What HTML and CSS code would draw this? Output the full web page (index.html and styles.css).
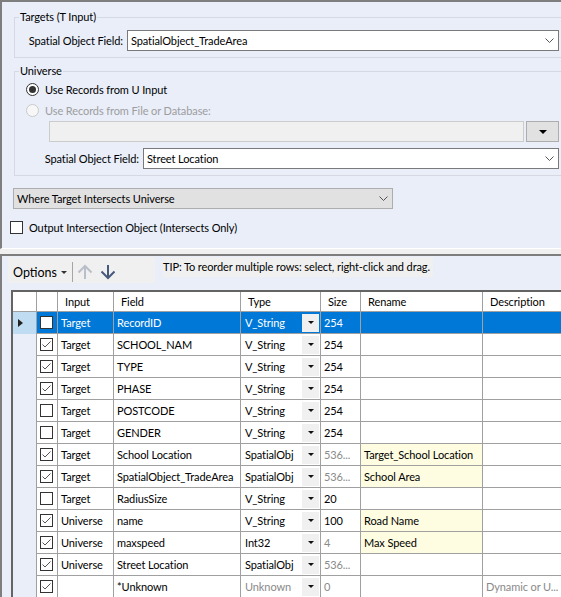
FILE: index.html
```html
<!DOCTYPE html>
<html>
<head>
<meta charset="utf-8">
<title>Spatial Match</title>
<link rel="stylesheet" href="styles.css">
</head>
<body>
<div class="app">
  <section class="panel config">
    <fieldset class="group targets">
      <legend>Targets (T Input)</legend>
      <div class="field-row">
        <span class="field-label lbl-targets">Spatial Object Field:</span>
        <div class="combo"><span>SpatialObject_TradeArea</span><svg class="chev" width="9" height="5" viewBox="0 0 9 5"><path d="M.5.5l4 4 4-4" fill="none" stroke="#555"/></svg></div>
      </div>
    </fieldset>
    <fieldset class="group universe">
      <legend>Universe</legend>
      <div class="radio-row"><span class="radio on"><span class="dot"></span></span><span>Use Records from U Input</span></div>
      <div class="radio-row disabled"><span class="radio"></span><span>Use Records from File or Database:</span></div>
      <div class="file-row">
        <div class="file-input"></div>
        <div class="file-btn"><span class="tri-down"></span></div>
      </div>
      <div class="field-row gap-top">
        <span class="field-label lbl-universe">Spatial Object Field:</span>
        <div class="combo"><span>Street Location</span><svg class="chev" width="9" height="5" viewBox="0 0 9 5"><path d="M.5.5l4 4 4-4" fill="none" stroke="#555"/></svg></div>
      </div>
    </fieldset>
    <div class="combo flat where"><span>Where Target Intersects Universe</span><svg class="chev" width="9" height="5" viewBox="0 0 9 5"><path d="M.5.5l4 4 4-4" fill="none" stroke="#555"/></svg></div>
    <div class="check-row"><span class="box"></span><span>Output Intersection Object (Intersects Only)</span></div>
  </section>
  <div class="divider"></div>
  <section class="panel fields">
    <div class="toolbar-row">
      <div class="toolbar">
        <span class="options">Options</span>
        <span class="mini-tri"></span>
        <span class="sep"></span>
        <svg class="arrow up" width="16" height="16" viewBox="0 0 16 16"><path d="M8 15V2.5M1.5 8.5L8 2l6.5 6.5" fill="none" stroke="#b9bfc9" stroke-width="2"/></svg>
        <svg class="arrow down" width="16" height="16" viewBox="0 0 16 16"><path d="M8 1v12.5M1.5 7.5L8 14l6.5-6.5" fill="none" stroke="#48597b" stroke-width="2"/></svg>
      </div>
      <div class="tip">TIP: To reorder multiple rows: select, right-click and drag.</div>
    </div>

    <div class="grid">
      <div class="row head">
        <div class="c rh"></div><div class="c"></div><div class="c hd">Input</div><div class="c hd">Field</div><div class="c hd">Type</div><div class="c hd">Size</div><div class="c hd">Rename</div><div class="c hd">Description</div>
      </div>

      <div class="row sel">
        <div class="c rh"><span class="tri-right"></span></div>
        <div class="c cb"><svg width="13" height="13" viewBox="0 0 13 13"><rect x=".5" y=".5" width="12" height="12" fill="#fff" stroke="#333"/></svg></div>
        <div class="c">Target</div><div class="c">RecordID</div>
        <div class="c type"><span>V_String</span><span class="dd"><span class="dd-tri"></span></span></div>
        <div class="c">254</div><div class="c"></div><div class="c"></div>
      </div>

      <div class="row">
        <div class="c rh"></div>
        <div class="c cb"><svg width="13" height="13" viewBox="0 0 13 13"><rect x=".5" y=".5" width="12" height="12" fill="#fff" stroke="#333"/><path d="M2.5 6.5l2.5 2.5 5.5-5.5" fill="none" stroke="#555"/></svg></div>
        <div class="c">Target</div><div class="c">SCHOOL_NAM</div>
        <div class="c type"><span>V_String</span><span class="dd"><span class="dd-tri"></span></span></div>
        <div class="c">254</div><div class="c"></div><div class="c"></div>
      </div>

      <div class="row">
        <div class="c rh"></div>
        <div class="c cb"><svg width="13" height="13" viewBox="0 0 13 13"><rect x=".5" y=".5" width="12" height="12" fill="#fff" stroke="#333"/><path d="M2.5 6.5l2.5 2.5 5.5-5.5" fill="none" stroke="#555"/></svg></div>
        <div class="c">Target</div><div class="c">TYPE</div>
        <div class="c type"><span>V_String</span><span class="dd"><span class="dd-tri"></span></span></div>
        <div class="c">254</div><div class="c"></div><div class="c"></div>
      </div>

      <div class="row">
        <div class="c rh"></div>
        <div class="c cb"><svg width="13" height="13" viewBox="0 0 13 13"><rect x=".5" y=".5" width="12" height="12" fill="#fff" stroke="#333"/><path d="M2.5 6.5l2.5 2.5 5.5-5.5" fill="none" stroke="#555"/></svg></div>
        <div class="c">Target</div><div class="c">PHASE</div>
        <div class="c type"><span>V_String</span><span class="dd"><span class="dd-tri"></span></span></div>
        <div class="c">254</div><div class="c"></div><div class="c"></div>
      </div>

      <div class="row">
        <div class="c rh"></div>
        <div class="c cb"><svg width="13" height="13" viewBox="0 0 13 13"><rect x=".5" y=".5" width="12" height="12" fill="#fff" stroke="#333"/></svg></div>
        <div class="c">Target</div><div class="c">POSTCODE</div>
        <div class="c type"><span>V_String</span><span class="dd"><span class="dd-tri"></span></span></div>
        <div class="c">254</div><div class="c"></div><div class="c"></div>
      </div>

      <div class="row">
        <div class="c rh"></div>
        <div class="c cb"><svg width="13" height="13" viewBox="0 0 13 13"><rect x=".5" y=".5" width="12" height="12" fill="#fff" stroke="#333"/></svg></div>
        <div class="c">Target</div><div class="c">GENDER</div>
        <div class="c type"><span>V_String</span><span class="dd"><span class="dd-tri"></span></span></div>
        <div class="c">254</div><div class="c"></div><div class="c"></div>
      </div>

      <div class="row">
        <div class="c rh"></div>
        <div class="c cb"><svg width="13" height="13" viewBox="0 0 13 13"><rect x=".5" y=".5" width="12" height="12" fill="#fff" stroke="#333"/><path d="M2.5 6.5l2.5 2.5 5.5-5.5" fill="none" stroke="#555"/></svg></div>
        <div class="c">Target</div><div class="c">School Location</div>
        <div class="c type"><span>SpatialObj</span><span class="dd"><span class="dd-tri"></span></span></div>
        <div class="c muted">536...</div><div class="c renamed">Target_School Location</div><div class="c"></div>
      </div>

      <div class="row">
        <div class="c rh"></div>
        <div class="c cb"><svg width="13" height="13" viewBox="0 0 13 13"><rect x=".5" y=".5" width="12" height="12" fill="#fff" stroke="#333"/><path d="M2.5 6.5l2.5 2.5 5.5-5.5" fill="none" stroke="#555"/></svg></div>
        <div class="c">Target</div><div class="c">SpatialObject_TradeArea</div>
        <div class="c type"><span>SpatialObj</span><span class="dd"><span class="dd-tri"></span></span></div>
        <div class="c muted">536...</div><div class="c renamed">School Area</div><div class="c"></div>
      </div>

      <div class="row">
        <div class="c rh"></div>
        <div class="c cb"><svg width="13" height="13" viewBox="0 0 13 13"><rect x=".5" y=".5" width="12" height="12" fill="#fff" stroke="#333"/></svg></div>
        <div class="c">Target</div><div class="c">RadiusSize</div>
        <div class="c type"><span>V_String</span><span class="dd"><span class="dd-tri"></span></span></div>
        <div class="c">20</div><div class="c"></div><div class="c"></div>
      </div>

      <div class="row">
        <div class="c rh"></div>
        <div class="c cb"><svg width="13" height="13" viewBox="0 0 13 13"><rect x=".5" y=".5" width="12" height="12" fill="#fff" stroke="#333"/><path d="M2.5 6.5l2.5 2.5 5.5-5.5" fill="none" stroke="#555"/></svg></div>
        <div class="c">Universe</div><div class="c">name</div>
        <div class="c type"><span>V_String</span><span class="dd"><span class="dd-tri"></span></span></div>
        <div class="c">100</div><div class="c renamed">Road Name</div><div class="c"></div>
      </div>

      <div class="row">
        <div class="c rh"></div>
        <div class="c cb"><svg width="13" height="13" viewBox="0 0 13 13"><rect x=".5" y=".5" width="12" height="12" fill="#fff" stroke="#333"/><path d="M2.5 6.5l2.5 2.5 5.5-5.5" fill="none" stroke="#555"/></svg></div>
        <div class="c">Universe</div><div class="c">maxspeed</div>
        <div class="c type"><span>Int32</span><span class="dd"><span class="dd-tri"></span></span></div>
        <div class="c muted">4</div><div class="c renamed">Max Speed</div><div class="c"></div>
      </div>

      <div class="row">
        <div class="c rh"></div>
        <div class="c cb"><svg width="13" height="13" viewBox="0 0 13 13"><rect x=".5" y=".5" width="12" height="12" fill="#fff" stroke="#333"/><path d="M2.5 6.5l2.5 2.5 5.5-5.5" fill="none" stroke="#555"/></svg></div>
        <div class="c">Universe</div><div class="c">Street Location</div>
        <div class="c type"><span>SpatialObj</span><span class="dd"><span class="dd-tri"></span></span></div>
        <div class="c muted">536...</div><div class="c"></div><div class="c"></div>
      </div>

      <div class="row">
        <div class="c rh"></div>
        <div class="c cb"><svg width="13" height="13" viewBox="0 0 13 13"><rect x=".5" y=".5" width="12" height="12" fill="#fff" stroke="#333"/><path d="M2.5 6.5l2.5 2.5 5.5-5.5" fill="none" stroke="#555"/></svg></div>
        <div class="c"></div><div class="c">*Unknown</div>
        <div class="c type muted"><span>Unknown</span><span class="dd"><span class="dd-tri"></span></span></div>
        <div class="c muted">0</div><div class="c"></div><div class="c muted">Dynamic or U...</div>
      </div>
    </div>
  </section>
</div>
</body>
</html>
```

FILE: styles.css
```css
html, body {
  margin: 0;
  padding: 0;
}
body {
  background: #f0f0f0;
  overflow: hidden;
  font-family: Lato, "Liberation Sans", sans-serif;
  font-size: 11px;
  letter-spacing: -0.1px;
  color: #000;
}
.app {
  width: 600px;
  height: 597px;
  overflow: hidden;
}

/* ---------- panels ---------- */
.panel {
  background: #e9eef9;
  border-top: 2px solid #7e7e7e;
  border-left: 2px solid #7e7e7e;
}
.config {
  padding: 0 0 14px 8px;
  border-bottom: 1px solid #fff;
}
.divider {
  height: 5px;
}
.fields {
  padding-top: 1px;
  height: 400px;
}

/* ---------- group boxes ---------- */
.group {
  margin: 8px 0 0 4px;
  padding: 6px 40px 6px 0;
  border: 1px solid #d5dae2;
  min-width: 0;
}
.group legend {
  padding: 0 1px;
  margin-left: 4px;
  line-height: 14px;
}
.universe {
  margin-top: 6px;
  padding-top: 1px;
}

.field-row {
  display: flex;
  align-items: center;
  gap: 4px;
}
.field-row.gap-top {
  margin-top: 6px;
}
.field-label {
  text-align: right;
  flex: none;
}
.lbl-targets { width: 108px; }
.lbl-universe { width: 124px; }

.combo {
  flex: 1;
  height: 21px;
  box-sizing: border-box;
  border: 1px solid #7a7a7a;
  background: #fff;
  display: flex;
  align-items: center;
  justify-content: space-between;
  padding: 0 4px 0 3px;
}
.combo .chev { flex: none; }
.combo.flat {
  background: #e1e1e1;
  border-color: #adadad;
}
.where {
  width: 380px;
  flex: none;
  margin: 12px 0 0 3px;
}

/* radios */
.radio-row {
  height: 21px;
  display: flex;
  align-items: center;
  margin-left: 11px;
  gap: 6px;
}
.radio {
  width: 13px;
  height: 13px;
  box-sizing: border-box;
  border: 1px solid #333;
  border-radius: 50%;
  background: #fff;
  display: flex;
  align-items: center;
  justify-content: center;
}
.radio .dot {
  width: 7px;
  height: 7px;
  border-radius: 50%;
  background: #333;
}
.radio-row.disabled { color: #9d9d9d; }
.radio-row.disabled .radio {
  border-color: #cacaca;
  background: #f7f7f7;
}

.file-row {
  height: 21px;
  display: flex;
  gap: 2px;
  margin-left: 34px;
}
.file-input {
  flex: 1;
  background: #f0f0f0;
  border: 1px solid #cccccc;
}
.file-btn {
  width: 33px;
  box-sizing: border-box;
  background: #e1e1e1;
  border: 1px solid #adadad;
  display: flex;
  align-items: center;
  justify-content: center;
}
.tri-down {
  width: 0;
  height: 0;
  border-left: 4px solid transparent;
  border-right: 4px solid transparent;
  border-top: 4px solid #000;
}

/* checkbox row */
.check-row {
  margin-top: 11px;
  height: 14px;
  display: flex;
  align-items: center;
  gap: 6px;
}
.check-row .box {
  width: 13px;
  height: 13px;
  box-sizing: border-box;
  border: 1px solid #333;
  background: #fff;
}

/* ---------- toolbar ---------- */
.toolbar-row {
  display: flex;
  align-items: flex-start;
}
.toolbar {
  margin-left: 6px;
  width: 147px;
  height: 26px;
  box-sizing: border-box;
  padding: 4px 0 0 5px;
  background: #f0f0f0;
  display: flex;
  align-items: center;
}
.options {
  width: 44px;
  font-size: 12.5px;
  letter-spacing: 0;
}
.mini-tri {
  margin-left: 4px;
  width: 0;
  height: 0;
  border-left: 3px solid transparent;
  border-right: 3px solid transparent;
  border-top: 3px solid #333;
}
.sep {
  margin-left: 5px;
  width: 1px;
  height: 20px;
  background: #a5a5a5;
}
.arrow.up { margin-left: 4px; }
.arrow.down { margin-left: 7px; }
.tip {
  margin-left: 8px;
  height: 20px;
  line-height: 20px;
  padding-right: 3px;
  background: #f0f0f0;
}

/* ---------- grid ---------- */
.grid {
  margin: 7px 0 0 9px;
  width: max-content;
  border-top: 2px solid #646464;
  border-left: 2px solid #646464;
}
.row {
  display: grid;
  grid-template-columns: 24px 21px 56px 127px 80px 40px 122px 120px;
  height: 22px;
}
.row.head { height: 20px; }
.c {
  box-sizing: border-box;
  border-right: 1px solid #a0a0a0;
  border-bottom: 1px solid #a0a0a0;
  background: #fff;
  display: flex;
  align-items: center;
  padding-left: 3px;
  white-space: nowrap;
  overflow: hidden;
}
.c.hd { padding-left: 7px; }
.c.rh {
  background: #e9eef9;
  border-bottom: none;
  padding-left: 5px;
}
.row.head .c.rh {
  background: #fff;
  border-bottom: 1px solid #a0a0a0;
}
.c.cb { padding-left: 3px; }
.c.cb svg { display: block; }
.c.type {
  padding-left: 4px;
  padding-right: 1px;
  justify-content: space-between;
}
.dd {
  width: 17px;
  height: 18px;
  background: #f0f0f0;
  display: flex;
  align-items: center;
  justify-content: center;
  flex: none;
}
.dd-tri {
  width: 0;
  height: 0;
  border-left: 3px solid transparent;
  border-right: 3px solid transparent;
  border-top: 3px solid #111;
}
.c.muted, .c.muted span { color: #8a8a8a; }
.c.renamed { background: #fffde1; }

.row.sel .c { background: #0078d7; color: #fff; }
.row.sel .c.rh { background: #c0dcf3; }
.tri-right {
  width: 0;
  height: 0;
  border-top: 4.5px solid transparent;
  border-bottom: 4.5px solid transparent;
  border-left: 5px solid #222;
}
```
